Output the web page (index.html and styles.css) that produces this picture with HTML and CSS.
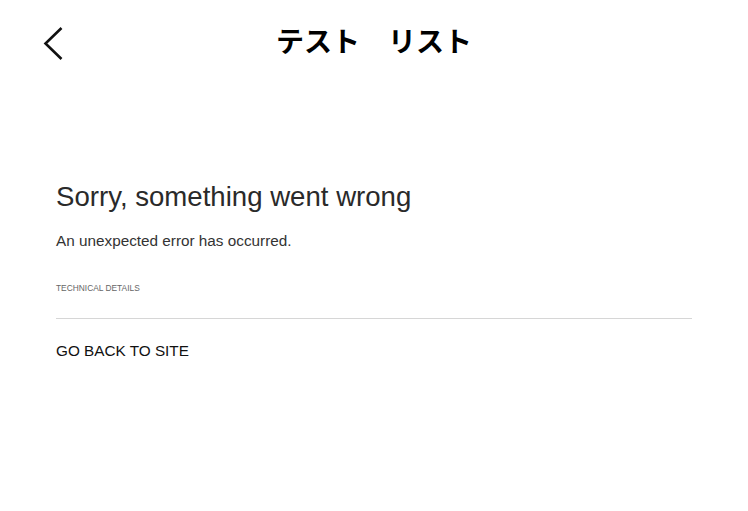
FILE: index.html
```html
<!DOCTYPE html>
<html lang="ja">
<head>
<meta charset="utf-8">
<link rel="stylesheet" href="styles.css">
</head>
<body>
<header class="topbar">
  <button class="back" aria-label="back">
    <svg width="24" height="36" viewBox="0 0 24 36"><path d="M20.5 2 L4.5 17.5 L20.5 33" fill="none" stroke="#111" stroke-width="2.6"/></svg>
  </button>
  <h1 class="title">テスト　リスト</h1>
</header>
<main class="content">
  <h2 class="heading">Sorry, something went wrong</h2>
  <p class="message">An unexpected error has occurred.</p>
  <div class="details">TECHNICAL DETAILS</div>
  <a class="goback" href="#">GO BACK TO SITE</a>
</main>
</body>
</html>
```
FILE: styles.css
```css
html, body { margin: 0; padding: 0; background: #fff; }
body { font-family: "Liberation Sans", Arial, sans-serif; color: #222; }
.topbar { position: relative; height: 84px; display: flex; align-items: center; justify-content: center; }
.back { position: absolute; left: 41px; top: 26px; background: none; border: 0; padding: 0; width: 24px; height: 36px; }
.back svg { display: block; }
.title { margin: -5px 0 0; font-family: "Noto Sans CJK JP", sans-serif; font-weight: 700; font-size: 28px; color: #000; line-height: 1; }
.content { padding: 97px 56px 0 56px; }
.heading { margin: 0; font-weight: 300; font-size: 27.6px; line-height: 32px; color: #2a2a2a; }
.message { margin: 19px 0 0; font-size: 15.3px; line-height: 18px; color: #333; }
.details { margin-top: 33px; font-size: 8.4px; line-height: 10px; color: #666; padding-bottom: 25px; border-bottom: 1px solid #d6d6d6; }
.goback { display: block; margin-top: 22px; font-size: 15.3px; line-height: 20px; color: #111; text-decoration: none; }
```
